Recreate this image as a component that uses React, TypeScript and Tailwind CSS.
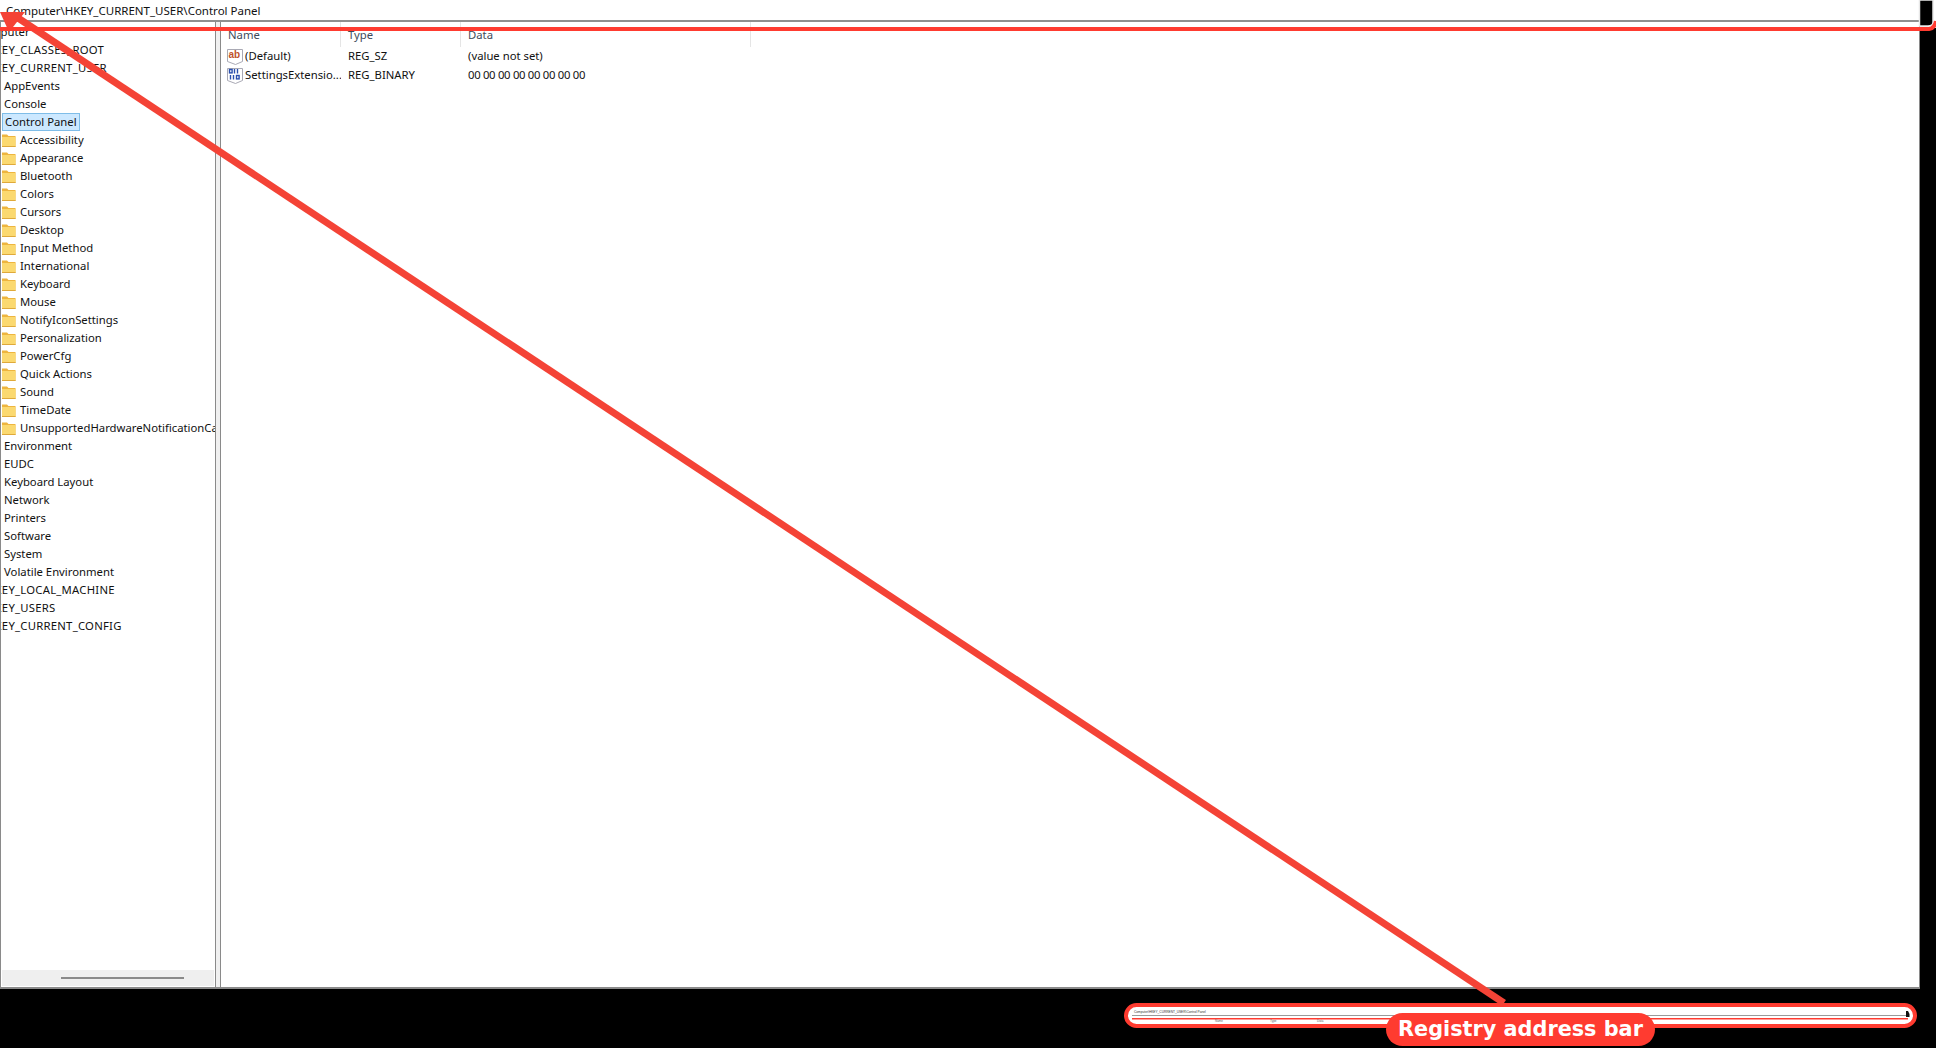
const FONT = "font-['Noto_Sans','Open_Sans',sans-serif]";

const tree: [string, number][] = [
  ["HKEY_CLASSES_ROOT", 0],
  ["HKEY_CURRENT_USER", 0],
  ["AppEvents", 1],
  ["Console", 1],
  ["Control Panel", 2],
  ["Accessibility", 3],
  ["Appearance", 3],
  ["Bluetooth", 3],
  ["Colors", 3],
  ["Cursors", 3],
  ["Desktop", 3],
  ["Input Method", 3],
  ["International", 3],
  ["Keyboard", 3],
  ["Mouse", 3],
  ["NotifyIconSettings", 3],
  ["Personalization", 3],
  ["PowerCfg", 3],
  ["Quick Actions", 3],
  ["Sound", 3],
  ["TimeDate", 3],
  ["UnsupportedHardwareNotificationCache", 3],
  ["Environment", 1],
  ["EUDC", 1],
  ["Keyboard Layout", 1],
  ["Network", 1],
  ["Printers", 1],
  ["Software", 1],
  ["System", 1],
  ["Volatile Environment", 1],
  ["HKEY_LOCAL_MACHINE", 0],
  ["HKEY_USERS", 0],
  ["HKEY_CURRENT_CONFIG", 0],
];

function Folder() {
  return (
    <svg width="14" height="13" viewBox="0 0 14 13" className="shrink-0">
      <path d="M0 0.5h5l1.5 1.5H13.5V13H0z" fill="#eeb53f" />
      <path d="M0 3h13.5V13H0z" fill="#fbd970" />
      <path d="M0 12h13.5v1H0z" fill="#dfa93a" />
    </svg>
  );
}

function TreeRow({ label, kind }: { label: string; kind: number }) {
  if (kind === 2) {
    return (
      <div className="h-[18px] flex items-center">
        <span className="ml-[1px] h-[18px] w-[78px] flex items-center pl-[2px] bg-[#cce8ff] border border-[#7fbde8] whitespace-nowrap">
          {label}
        </span>
      </div>
    );
  }
  if (kind === 3) {
    return (
      <div className="h-[18px] flex items-center pl-[1px] whitespace-nowrap">
        <Folder />
        <span className="ml-[4px]">{label}</span>
      </div>
    );
  }
  return (
    <div className={`h-[18px] flex items-center whitespace-nowrap ${kind === 1 ? "pl-[3px]" : "-ml-[15px] tracking-[0.25px]"}`}>
      {label}
    </div>
  );
}

function StringIcon() {
  return (
    <svg width="16" height="16" viewBox="0 0 16 16" className="shrink-0">
      <path d="M.5 .5h15v12l-7 3-8-3z" fill="#fff" stroke="#a9a9b4" />
      <text x="1.5" y="9" fontSize="10" fontWeight="700" fill="#c0532c" fontFamily="Liberation Sans, sans-serif">ab</text>
    </svg>
  );
}

function BinaryIcon() {
  return (
    <svg width="16" height="16" viewBox="0 0 16 16" className="shrink-0">
      <path d="M.5 .5h15v12l-7 3-8-3z" fill="#fff" stroke="#a9a9b4" />
      <g fill="none" stroke="#2a4fae" strokeWidth="1.4">
        <rect x="2.5" y="1.5" width="2.6" height="3.4" />
        <path d="M7.5 1v4.5M10.5 1v4.5" />
        <path d="M3.5 7v4.5M6.5 7v4.5" />
        <rect x="9.5" y="7.5" width="2.6" height="3.4" />
      </g>
    </svg>
  );
}

export default function App() {
  return (
    <div className={`relative w-[1936px] h-[1048px] overflow-hidden bg-black text-[11.3px] text-[#111] ${FONT}`}>
      <div className="w-[1920px] h-[989px] bg-white flex flex-col border-b-2 border-r border-[#8a8a8a]">
        <div className="h-[22px] shrink-0 flex items-center pl-[6px] pt-[1px] border-b-2 border-[#8f8f8f] whitespace-nowrap text-[11.5px]">
          Computer\HKEY_CURRENT_USER\Control Panel
        </div>
        <div className="flex-1 min-h-0 flex">
          <div className="w-[216px] shrink-0 flex flex-col border-l border-r border-[#8a8a8a] overflow-hidden">
            <div className="flex-1 min-h-0 overflow-hidden">
              <div className="h-[18px] -ml-[25px] mt-[1px] flex items-center">Computer</div>
              <div>
                {tree.map(([label, kind]) => (
                  <TreeRow key={label} label={label} kind={kind} />
                ))}
              </div>
            </div>
            <div className="h-[16px] shrink-0 bg-[#efefef] mx-[1px] mb-[1px] flex items-center">
              <div className="ml-[59px] w-[123px] h-[2px] bg-[#8a8a8a]" />
            </div>
          </div>
          <div className="w-[4px] shrink-0 bg-[#f0f0f0]" />
          <div className="flex-1 min-w-0 border-l border-[#8a8a8a] flex flex-col">
            <div className="h-[25px] shrink-0 flex text-[#3f4b5a]">
              <div className="w-[120px] pl-[7px] pt-[5px] border-r border-[#e5e5e5]">Name</div>
              <div className="w-[120px] pl-[7px] pt-[5px] border-r border-[#e5e5e5]">Type</div>
              <div className="w-[290px] pl-[7px] pt-[5px] border-r border-[#e5e5e5]">Data</div>
            </div>
            <div className="h-[19px] flex items-center">
              <div className="w-[120px] pl-[6px] flex items-center gap-[2px] whitespace-nowrap"><StringIcon />(Default)</div>
              <div className="w-[120px] pl-[7px]">REG_SZ</div>
              <div className="pl-[7px]">(value not set)</div>
            </div>
            <div className="h-[19px] flex items-center">
              <div className="w-[120px] pl-[6px] flex items-center gap-[2px] whitespace-nowrap overflow-hidden"><BinaryIcon />SettingsExtensio...</div>
              <div className="w-[120px] pl-[7px]">REG_BINARY</div>
              <div className="pl-[7px] tracking-[-0.3px]">00 00 00 00 00 00 00 00</div>
            </div>
          </div>
        </div>
      </div>

      <svg className="absolute inset-0 pointer-events-none" width="1936" height="1048" viewBox="0 0 1936 1048">
        <rect x="1126" y="1005" width="789" height="21" rx="10.5" fill="#fff" stroke="#ff3b30" strokeWidth="4" />
        <text x="1134" y="1013" fontSize="3.2" fill="#333" fontFamily="Liberation Sans, sans-serif">Computer\HKEY_CURRENT_USER\Control Panel</text>
        <path d="M1132 1015.5H1908" stroke="#9a9a9a" strokeWidth="1" />
        <path d="M1132 1018.7H1908" stroke="#ff3b30" strokeWidth="1.4" />
        <text x="1215" y="1021.8" fontSize="3" fill="#666" fontFamily="Liberation Sans, sans-serif">Name</text>
        <text x="1270" y="1021.8" fontSize="3" fill="#666" fontFamily="Liberation Sans, sans-serif">Type</text>
        <text x="1317" y="1021.8" fontSize="3" fill="#666" fontFamily="Liberation Sans, sans-serif">Data</text>
        <path d="M1906 1011h2l1.5 3v3h-3.5z" fill="#111" />
        <path d="M1920 0h16v28h-16z" fill="#fff" />
        <path d="M1919.5 0V26H1928Q1933 26 1933 22V0z" fill="#000" stroke="#e8e8e8" strokeWidth="1.5" />
        <path d="M1504 1003L12 14" stroke="#f44336" strokeWidth="7" />
        <path d="M0 12L25 12L9 32Z" fill="#f44336" />
        <path d="M0 29H1929Q1935 28 1936 21" stroke="#ff3b30" strokeWidth="4" fill="none" />
      </svg>

      <div className="absolute left-[1386px] top-[1013px] h-[33px] w-[269px] rounded-full bg-[#ff3b30] text-white flex items-center justify-center text-[20.8px] font-bold font-['DejaVu_Sans',sans-serif] whitespace-nowrap">
        Registry address bar
      </div>
    </div>
  );
}
